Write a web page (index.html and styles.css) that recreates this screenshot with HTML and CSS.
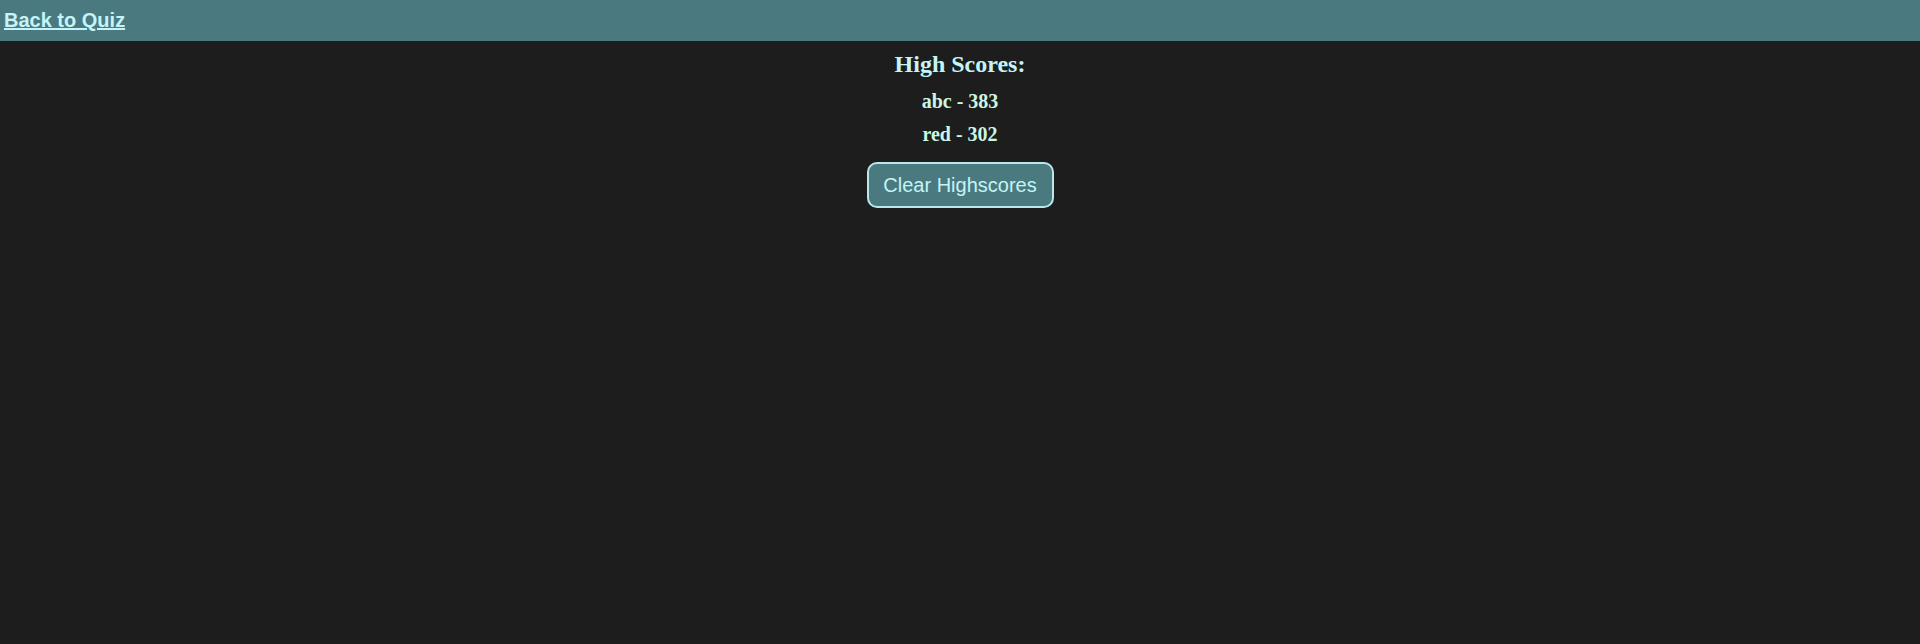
FILE: index.html
```html
<!DOCTYPE html>
<html>
<head>
<meta charset="utf-8">
<link rel="stylesheet" href="styles.css">
</head>
<body>
<header class="topbar">
  <a class="back-link" href="#">Back to Quiz</a>
</header>
<main class="scores">
  <h2 class="scores-title">High Scores:</h2>
  <ul class="score-list">
    <li class="score-item">abc - 383</li>
    <li class="score-item">red - 302</li>
  </ul>
  <button class="clear-btn">Clear Highscores</button>
</main>
</body>
</html>
```
FILE: styles.css
```css
html, body {
  margin: 0;
  padding: 0;
  background: #1c1d1c;
  height: 100%;
}
body {
  font-family: "Liberation Serif", "Times New Roman", serif;
  color: #c4f4f8;
}
.topbar {
  height: 41px;
  background: #4a7a7f;
  display: flex;
  align-items: center;
  padding-left: 4px;
  box-sizing: border-box;
}
.back-link {
  font-family: "Liberation Sans", Arial, sans-serif;
  font-weight: bold;
  font-size: 20px;
  color: #c4f4f8;
  text-decoration: underline;
}
.scores {
  display: flex;
  flex-direction: column;
  align-items: center;
}
.scores-title {
  font-size: 24px;
  font-weight: bold;
  margin: 10px 0 12px;
}
.score-list {
  list-style: none;
  margin: 0;
  padding: 0;
  display: flex;
  flex-direction: column;
  align-items: center;
  gap: 10px;
}
.score-item {
  font-size: 20px;
  font-weight: bold;
  color: #cdf5e4;
}
.clear-btn {
  margin-top: 16px;
  width: 187px;
  height: 46px;
  background: #4a7a7f;
  color: #c4f4f8;
  border: 2px solid #b8e8ec;
  border-radius: 10px;
  font-family: "Liberation Sans", Arial, sans-serif;
  font-size: 20px;
}
```
